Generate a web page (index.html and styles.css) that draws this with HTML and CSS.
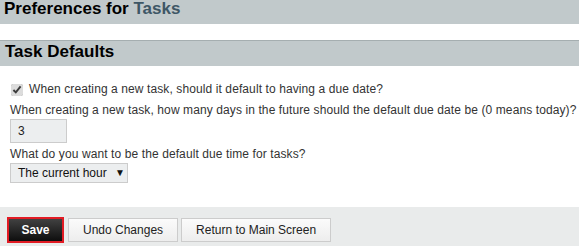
FILE: index.html
```html
<!DOCTYPE html>
<html>
<head>
  <title>Preferences for Tasks</title>
  <link rel="stylesheet" href="styles.css">
</head>
<body>
  <div class="page-title">Preferences for <span class="app-name">Tasks</span></div>

  <div class="section">
    <h2 class="section-title">Task Defaults</h2>
    <form class="prefs">
      <label class="check-row">
        <input type="checkbox" checked> When creating a new task, should it default to having a due date?
      </label>
      <div class="question">When creating a new task, how many days in the future should the default due date be (0 means today)?</div>
      <input type="text" class="days" value="3">
      <div class="question">What do you want to be the default due time for tasks?</div>
      <div class="select">The current hour <span class="arrow">&#9660;</span></div>
    </form>
  </div>

  <div class="buttons">
    <button class="btn btn-save">Save</button>
    <button class="btn">Undo Changes</button>
    <button class="btn">Return to Main Screen</button>
  </div>
</body>
</html>
```

FILE: styles.css
```css
body {
  margin: 0;
  padding: 0;
  font-family: "Liberation Sans", Arial, sans-serif;
  font-size: 12px;
  color: #333;
  background: #fff;
}

.page-title {
  background-color: #c1c9cb;
  height: 24px;
  line-height: 17px;
  padding-left: 4px;
  font-size: 17px;
  font-weight: bold;
  color: #000;
}

.app-name {
  color: #3e5766;
}

.section {
  margin-top: 16px;
}

.section-title {
  margin: 0;
  background-color: #c1c9cb;
  border-top: 1px solid #a5aeb0;
  height: 25px;
  line-height: 21px;
  padding-left: 5px;
  font-size: 17px;
  font-weight: bold;
  color: #000;
}

.prefs {
  padding: 16px 10px 0;
  height: 141px;
  box-sizing: border-box;
}

.check-row {
  display: flex;
  align-items: center;
  height: 15px;
  line-height: 15px;
  letter-spacing: 0.1px;
}

.check-row input {
  margin: 0 6px 0 1px;
  width: 12px;
  height: 12px;
  accent-color: #dcdcdc;
}

.question {
  margin-top: 6px;
  line-height: 15px;
  letter-spacing: 0.1px;
  white-space: nowrap;
}

.days {
  display: block;
  margin-top: 1px;
  width: 57px;
  height: 24px;
  box-sizing: border-box;
  border: 1px solid #ccc;
  background: #eceeef;
  padding: 0 7px;
  font-family: inherit;
  font-size: 12px;
  color: #222;
  outline: none;
}

.days + .question {
  margin-top: 4px;
}

.select {
  margin-top: 1px;
  width: 118px;
  height: 20px;
  line-height: 18px;
  box-sizing: border-box;
  border: 1px solid #ccc;
  background: #eceeef;
  padding-left: 7px;
  color: #111;
}

.arrow {
  font-size: 10px;
  margin-left: 5px;
  vertical-align: 1px;
}

.buttons {
  background-color: #e9ebeb;
  height: 39px;
  display: flex;
  align-items: center;
  gap: 3px;
  padding-left: 7px;
  padding-top: 7px;
  box-sizing: border-box;
}

.btn {
  height: 24px;
  border: 1px solid #ccc;
  background: linear-gradient(#fbfbfb, #ededed);
  font-family: inherit;
  font-size: 12px;
  color: #222;
  padding: 0 14px;
}

.btn-save {
  width: 57px;
  height: 26px;
  margin-right: 1px;
  color: #fff;
  font-weight: bold;
  background: linear-gradient(#414141, #0e0e0e);
  border: 2px solid #e21b24;
  padding: 0;
}
```
